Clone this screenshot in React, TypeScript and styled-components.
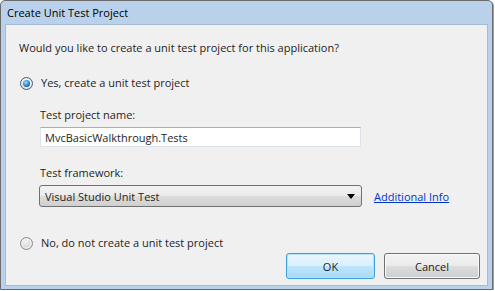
import React from "react"
import styled, { createGlobalStyle } from "styled-components"

const Global = createGlobalStyle`
  html, body { margin: 0; padding: 0; background: #fff; }
  body { font-family: "Open Sans", "Noto Sans", sans-serif; font-size: 11px; color: #1e1e1e; }
  * { box-sizing: border-box; }
`

const Window = styled.div`
  width: 493px;
  height: 290px;
  border: 1px solid #6b6b6b;
  border-radius: 5px 5px 0 0;
  background: #b9d1ea;
  display: flex;
  flex-direction: column;
  box-shadow: 1px 1px 0 #a0a0a0;
`

const TitleBar = styled.div`
  height: 23px;
  display: flex;
  align-items: center;
  padding-left: 6px;
  font-size: 11px;
  color: #000;
`

const Client = styled.div`
  flex: 1;
  margin: 0 4px 3px 4px;
  background: #f0f0f0;
  border: 1px solid #a6bbd3;
  display: flex;
  flex-direction: column;
  padding: 14px 0 0 13px;
`

const Question = styled.div`
  line-height: 18px;
  margin-bottom: 17px;
`

const RadioRow = styled.label`
  display: flex;
  align-items: center;
  gap: 8px;
  margin-left: 1px;
  line-height: 18px;
`

const RadioDot = styled.span<{ checked?: boolean }>`
  width: 13px;
  height: 13px;
  border-radius: 50%;
  border: 1px solid ${(p) => (p.checked ? "#3c5f80" : "#8c8c8c")};
  background: radial-gradient(circle at 50% 40%, #ffffff, #d8d8d8);
  display: flex;
  align-items: center;
  justify-content: center;
  &::after {
    content: "";
    width: 7px;
    height: 7px;
    border-radius: 50%;
    background: ${(p) =>
      p.checked
        ? "radial-gradient(circle at 40% 35%, #9fe0ff, #1b79c7 60%, #0f4f8f)"
        : "radial-gradient(circle at 40% 35%, #f4f4f4, #cfcfcf)"};
  }
`

const Options = styled.div`
  display: flex;
  flex-direction: column;
  padding-left: 21px;
  margin-top: 14px;
`

const FieldLabel = styled.div`
  line-height: 18px;
  margin-bottom: 3px;
`

const TextBox = styled.div`
  width: 321px;
  height: 20px;
  background: #fff;
  border: 1px solid #dde3ea;
  border-top-color: #abadb3;
  display: flex;
  align-items: center;
  padding-left: 4px;
  margin-bottom: 17px;
`

const SelectRow = styled.div`
  display: flex;
  align-items: center;
  gap: 12px;
  margin-left: -1px;
`

const Select = styled.div`
  width: 323px;
  height: 22px;
  border: 1px solid #707070;
  border-radius: 3px;
  background: linear-gradient(#f2f2f2 0%, #ebebeb 50%, #dddddd 51%, #cfcfcf 100%);
  display: flex;
  align-items: center;
  justify-content: space-between;
  padding: 0 6px 0 5px;
`

const Arrow = styled.span`
  width: 0;
  height: 0;
  border-left: 4px solid transparent;
  border-right: 4px solid transparent;
  border-top: 5px solid #000;
`

const Link = styled.a`
  color: #0033cc;
  text-decoration: underline;
  cursor: pointer;
`

const Bottom = styled.div`
  margin-top: 27px;
  display: flex;
  flex-direction: column;
`

const Buttons = styled.div`
  display: flex;
  justify-content: flex-end;
  gap: 9px;
  padding-right: 7px;
  margin-top: 1px;
`

const Button = styled.button<{ primary?: boolean }>`
  font-family: inherit;
  font-size: 11px;
  color: #1e1e1e;
  height: 26px;
  width: ${(p) => (p.primary ? 89 : 96)}px;
  border-radius: 3px;
  border: 1px solid ${(p) => (p.primary ? "#3c9fd6" : "#707070")};
  background: ${(p) =>
    p.primary
      ? "linear-gradient(#eaf6fd 0%, #d9f0fc 50%, #bee6fd 51%, #a7d9f5 100%)"
      : "linear-gradient(#f2f2f2 0%, #ebebeb 50%, #dddddd 51%, #cfcfcf 100%)"};
  box-shadow: ${(p) => (p.primary ? "inset 0 0 0 1px #b8e4fb" : "inset 0 0 0 1px #fcfcfc")};
  padding: 0;
`

export default function App() {
  return (
    <>
      <Global />
      <Window>
        <TitleBar>Create Unit Test Project</TitleBar>
        <Client>
          <Question>Would you like to create a unit test project for this application?</Question>
          <RadioRow>
            <RadioDot checked />
            Yes, create a unit test project
          </RadioRow>
          <Options>
            <FieldLabel>Test project name:</FieldLabel>
            <TextBox>MvcBasicWalkthrough.Tests</TextBox>
            <FieldLabel>Test framework:</FieldLabel>
            <SelectRow>
              <Select>
                Visual Studio Unit Test
                <Arrow />
              </Select>
              <Link>Additional Info</Link>
            </SelectRow>
          </Options>
          <Bottom>
            <RadioRow>
              <RadioDot />
              No, do not create a unit test project
            </RadioRow>
            <Buttons>
              <Button primary>OK</Button>
              <Button>Cancel</Button>
            </Buttons>
          </Bottom>
        </Client>
      </Window>
    </>
  )
}
